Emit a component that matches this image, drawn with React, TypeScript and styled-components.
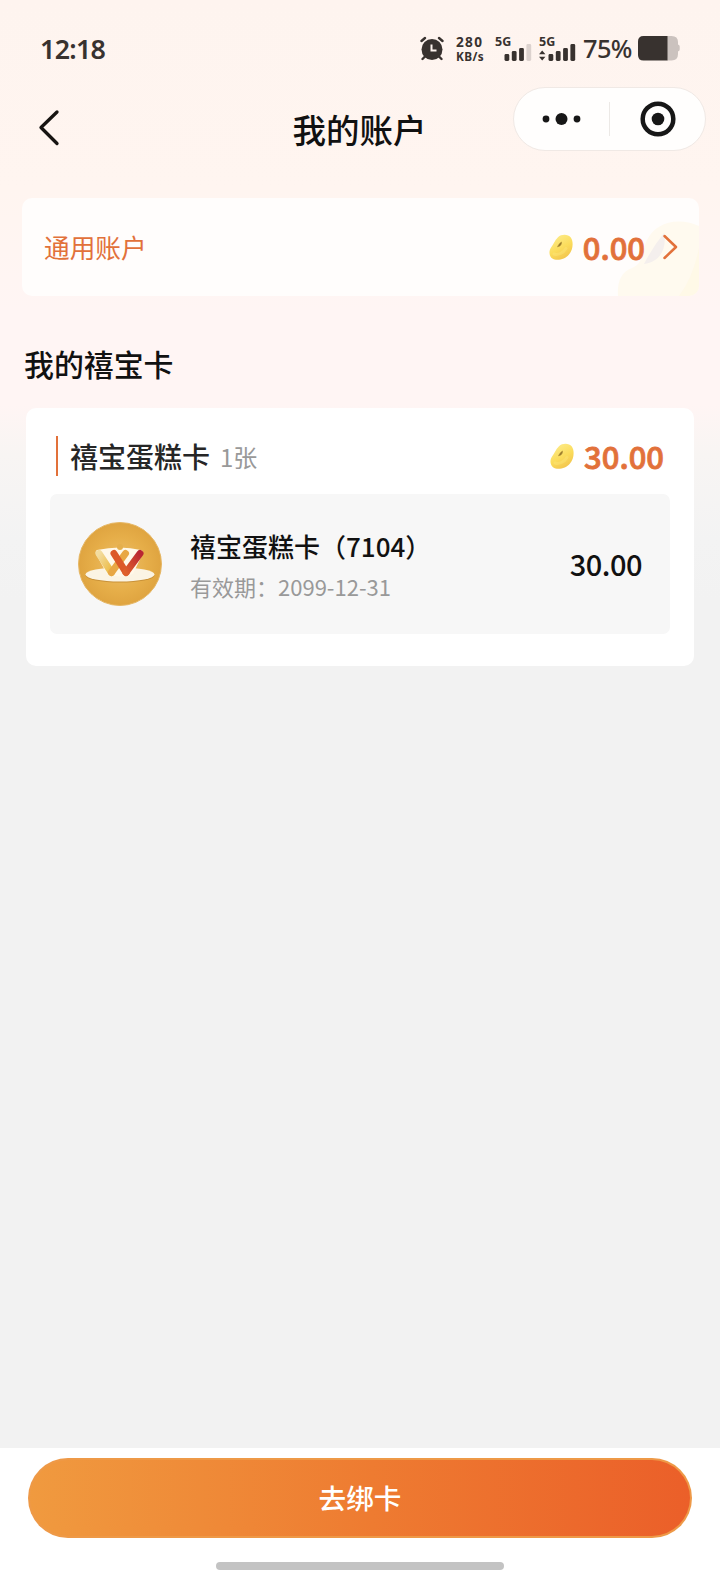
import React from "react";
import styled, { createGlobalStyle } from "styled-components";

const ORANGE = "#e2713a";

const GlobalStyle = createGlobalStyle`
  * { box-sizing: border-box; }
  body {
    margin: 0;
    background: #f2f2f2;
    font-family: "Noto Sans CJK SC", "Noto Sans", sans-serif;
    color: #111;
  }
`;

const Page = styled.div`
  display: flex;
  flex-direction: column;
  width: 720px;
  height: 1584px;
  background: linear-gradient(
    180deg,
    #fef4ef 0,
    #fff5f0 190px,
    #fff5f4 310px,
    #fff5f4 405px,
    #f8f5f3 455px,
    #f3f3f3 540px,
    #f2f2f2 600px
  );
`;

const StatusBar = styled.header`
  display: flex;
  justify-content: space-between;
  align-items: flex-start;
  height: 80px;
  padding: 36px 40px 0 40px;
  color: #38322f;
  font-family: "Noto Sans", sans-serif;
`;

const Clock = styled.time`
  font-size: 26.8px;
  font-weight: 600;
  line-height: 25px;
  letter-spacing: -0.7px;
`;

const StatusIcons = styled.div`
  display: flex;
  align-items: flex-start;
  height: 26px;
`;

const Speed = styled.div`
  display: flex;
  flex-direction: column;
  width: 28px;
  margin-left: 11px;
  font-weight: 700;
  white-space: nowrap;
`;

const SpeedValue = styled.span`
  font-size: 13.6px;
  line-height: 12px;
  letter-spacing: 1.3px;
`;

const SpeedUnit = styled.span`
  margin-top: 1px;
  font-size: 11.8px;
  line-height: 14px;
  letter-spacing: 0.4px;
`;

const Signal = styled.div<{ $width: number; $gap: number }>`
  display: flex;
  flex-direction: column;
  width: ${(p) => p.$width}px;
  margin-left: ${(p) => p.$gap}px;
  svg { margin-top: -4px; }
`;

const SignalLabel = styled.span`
  font-size: 12.5px;
  font-weight: 700;
  line-height: 12px;
`;

const Percent = styled.span`
  width: 49px;
  margin: 0 6px 0 7px;
  font-size: 25.4px;
  font-weight: 500;
  line-height: 24px;
  letter-spacing: -0.6px;
`;

const NavBar = styled.nav`
  display: grid;
  grid-template-columns: 207px 306px 193px;
  height: 118px;
  align-items: start;
`;

const BackButton = styled.button`
  width: 30px;
  height: 40px;
  margin: 27px 0 0 34px;
  padding: 0;
  border: 0;
  background: none;
`;

const NavTitle = styled.h1`
  margin: 27px 1px 0 0;
  font-size: 33.5px;
  font-weight: 500;
  line-height: 44px;
  text-align: center;
`;

const Capsule = styled.div`
  display: grid;
  grid-template-columns: 95px 1px 1fr;
  align-items: center;
  justify-items: center;
  height: 64px;
  margin-top: 7px;
  border: 1px solid #f0e9e5;
  border-radius: 32px;
  background: #fffefd;
`;

const CapsuleLine = styled.i`
  width: 1px;
  height: 34px;
  background: #ece9e6;
`;

const GeneralCard = styled.section`
  position: relative;
  display: flex;
  align-items: center;
  justify-content: space-between;
  height: 98px;
  margin: 0 21px 0 22px;
  padding: 0 21px 0 22px;
  border-radius: 10px;
  overflow: hidden;
  background: #fffdfc;
`;

const Watermark = styled.svg`
  position: absolute;
  right: 0;
  bottom: 0;
`;

const GeneralLabel = styled.span`
  font-size: 25.7px;
  line-height: 36px;
  color: ${ORANGE};
`;

const Amount = styled.div`
  position: relative;
  display: flex;
  align-items: center;
`;

const AmountValue = styled.strong`
  margin: 0 0 0 10px;
  font-size: 31px;
  font-weight: 500;
  line-height: 40px;
  color: ${ORANGE};
  -webkit-text-stroke: 0.8px ${ORANGE};
`;

const ArrowIcon = styled.svg`
  margin: 0 0 0 17px;
`;

const SectionTitle = styled.h2`
  margin: 45px 0 23px 24px;
  font-size: 29.9px;
  font-weight: 500;
  line-height: 44px;
`;

const CardGroup = styled.section`
  height: 258px;
  margin: 0 26px;
  padding: 28px 24px 0 24px;
  border-radius: 10px;
  background: #fff;
`;

const GroupHeader = styled.div`
  display: flex;
  align-items: center;
  height: 40px;
  margin: 0 6px 18px;
`;

const Accent = styled.i`
  width: 2px;
  height: 40px;
  background: ${ORANGE};
`;

const GroupName = styled.h3`
  margin: 0 0 0 12px;
  font-size: 28px;
  font-weight: 500;
  line-height: 40px;
  color: #262626;
`;

const GroupCount = styled.span`
  flex: 1;
  margin: 2px 0 0 10px;
  font-size: 24px;
  line-height: 40px;
  color: #999;
`;

const CardItem = styled.div`
  display: flex;
  align-items: center;
  height: 140px;
  padding: 0 28px;
  border-radius: 7px;
  background: #f7f7f7;
`;

const CardInfo = styled.div`
  flex: 1;
  margin: 3px 0 0 28px;
`;

const CardName = styled.div`
  font-size: 26px;
  font-weight: 500;
  line-height: 40px;
`;

const CardExpiry = styled.div`
  font-size: 22px;
  line-height: 40px;
  color: #999;
`;

const CardBalance = styled.span`
  margin-top: -2px;
  font-size: 29px;
  font-weight: 500;
  line-height: 40px;
  letter-spacing: -0.5px;
`;

const Footer = styled.footer`
  display: flex;
  flex-direction: column;
  align-items: center;
  height: 136px;
  margin-top: auto;
  padding-top: 10px;
  background: #fff;
`;

const BindButton = styled.button`
  width: 664px;
  height: 80px;
  padding: 0 0 1px;
  border: 2px solid transparent;
  border-radius: 40px;
  background:
    linear-gradient(90deg, #f09a3f, #ee7b31 52%, #eb5f29) padding-box,
    linear-gradient(#ee9947, #ee9947) border-box;
  font: 500 27.6px/75px "Noto Sans CJK SC", sans-serif;
  color: #fff;
`;

const HomeIndicator = styled.i`
  width: 288px;
  height: 8px;
  margin-top: 24px;
  border-radius: 4px;
  background: #c3c3c3;
`;

function AlarmIcon() {
  return (
    <svg width="25" height="25" viewBox="0 0 25 25" fill="none" stroke="#38322f" strokeLinecap="round">
      <circle cx="12" cy="13.500" r="10.500" fill="#38322f" stroke="none" />
      <path d="M1.500 5 5 2M22.500 5 19 2M5 20.500 2.500 23M19 20.500l2.500 2.500" strokeWidth="2.400" />
      <path d="M11.500 8.500v6h5" stroke="#fef4ef" strokeWidth="2" strokeLinecap="butt" />
    </svg>
  );
}

const BAR_HEIGHTS = [7, 10, 13, 17];

function Bars({ faded = 0, arrows = false }: { faded?: number; arrows?: boolean }) {
  return (
    <svg width="37" height="17" viewBox="0 0 37 17" fill="#38322f">
      {arrows && <path d="M0 7.300 3.200 3.500 6.400 7.300zM0 9.700h6.400L3.200 13.500z" transform="translate(0 3)" />}
      {BAR_HEIGHTS.map((h, i) => (
        <rect
          key={h}
          x={9.5 + i * 7.3}
          y={17 - h}
          width="4.8"
          height={h}
          rx="1.400"
          fill={i >= 4 - faded ? "#dcd2ce" : undefined}
        />
      ))}
    </svg>
  );
}

function BatteryIcon() {
  return (
    <svg width="42" height="25" viewBox="0 0 42 25">
      <path d="M29 0h4.500Q40 0 40 6v2.500q1.700.5 1.700 2v3q0 1.500-1.700 2V18q0 6.500-6.500 6.500H29z" fill="#cbc2be" />
      <path d="M29.500 0v24.500H5.500Q0 24.500 0 19V5.500Q0 0 5.500 0z" fill="#38322f" />
    </svg>
  );
}

function Bean() {
  return (
    <svg width="24" height="27" viewBox="0 0 24 27">
      <defs>
        <linearGradient id="bean" x1="0.200" y1="0" x2="0.700" y2="1">
          <stop offset="0" stopColor="#fdec8c" />
          <stop offset="0.550" stopColor="#fbdc5b" />
          <stop offset="1" stopColor="#f1c24c" />
        </linearGradient>
      </defs>
      <path
        d="M9 3.200C12.500 0 19 0 21.800 3.500 24.800 8 24 15.500 20 20.500 16 25.500 7.500 27.500 3 24.300 -.5 21.500 0 16 2.200 13.200 4.500 10.500 5.500 6.500 9 3.200z"
        fill="url(#bean)"
      />
      <path d="M5 20c4 1.500 9.500-1 12-5.500" fill="none" stroke="#fff08c" strokeWidth="3" strokeLinecap="round" opacity="0.300" />
      <path d="M12.500 8c.3 2.500-1.300 4.300-4 4.800 1-1.800 2-3.600 4-4.800z" fill="#8f7127" stroke="#b5953c" strokeWidth="0.700" />
    </svg>
  );
}

function CardLogo() {
  return (
    <svg width="84" height="84" viewBox="0 0 84 84" fill="none" strokeLinecap="round">
      <defs>
        <radialGradient id="gold">
          <stop offset="0" stopColor="#edc06b" />
          <stop offset="0.650" stopColor="#e6ae49" />
          <stop offset="1" stopColor="#dfa440" />
        </radialGradient>
        <linearGradient id="yellow" x1="0" y1="0" x2="1" y2="1">
          <stop offset="0" stopColor="#f3dda0" />
          <stop offset="1" stopColor="#ebb83d" />
        </linearGradient>
        <linearGradient id="red" x1="0" y1="1" x2="1" y2="0">
          <stop offset="0" stopColor="#df602b" />
          <stop offset="1" stopColor="#b92632" />
        </linearGradient>
      </defs>
      <circle cx="42" cy="42" r="41.500" fill="url(#gold)" stroke="#e6b765" />
      <ellipse cx="42" cy="53.600" rx="34.500" ry="7" fill="#c99137" />
      <ellipse cx="42" cy="52.500" rx="34.500" ry="7" fill="#fbf4e4" />
      <path d="M19 28Q42 23 63 28Q66 29 64 33L55 52q-12 5-26 0L18 32Q17 29 19 28z" fill="#fff8e9" />
      <circle cx="42" cy="25" r="3" fill="#e5af4c" />
      <path d="M21 31.500 33.500 50.500" stroke="url(#yellow)" strokeWidth="7" />
      <path d="M33.500 50.500 47.500 31.500" stroke="#e8a744" strokeWidth="7" />
      <path d="M36 31.500 48 50.500" stroke="#dc5928" strokeWidth="7" />
      <path d="M48 50.500 62 31.500" stroke="url(#red)" strokeWidth="7" />
    </svg>
  );
}

export default function App() {
  return (
    <Page>
      <GlobalStyle />
      <StatusBar>
        <Clock>12:18</Clock>
        <StatusIcons>
          <AlarmIcon />
          <Speed>
            <SpeedValue>280</SpeedValue>
            <SpeedUnit>KB/s</SpeedUnit>
          </Speed>
          <Signal $width={37} $gap={11}>
            <SignalLabel>5G</SignalLabel>
            <Bars faded={1} />
          </Signal>
          <Signal $width={37} $gap={7}>
            <SignalLabel>5G</SignalLabel>
            <Bars arrows />
          </Signal>
          <Percent>75%</Percent>
          <BatteryIcon />
        </StatusIcons>
      </StatusBar>

      <NavBar>
        <BackButton aria-label="返回">
          <svg width="30" height="40" viewBox="0 0 30 40" fill="none" stroke="#171412" strokeWidth="3.300" strokeLinecap="round" strokeLinejoin="round">
            <path d="M23 5 7 20.500 23 36.500" />
          </svg>
        </BackButton>
        <NavTitle>我的账户</NavTitle>
        <Capsule>
          <svg width="40" height="14" viewBox="0 0 40 14" fill="#171717">
            <circle cx="4" cy="7" r="3.400" />
            <circle cx="19.500" cy="7" r="6" />
            <circle cx="35" cy="7" r="3.400" />
          </svg>
          <CapsuleLine />
          <svg width="36" height="36" viewBox="0 0 36 36">
            <circle cx="18" cy="18" r="15.300" fill="none" stroke="#171717" strokeWidth="4.500" />
            <circle cx="18" cy="18" r="6.300" fill="#171717" />
          </svg>
        </Capsule>
      </NavBar>

      <GeneralCard>
        <Watermark width="82" height="76" viewBox="0 0 82 76">
          <path d="M30 20C38 3 60-4 82 6V76H1C0 62 4 52 15 48 27 43 25 31 30 20z" fill="#fffaef" />
          <path d="M82 28V76H62Q76 58 82 28z" fill="#fff7df" opacity="0.500" />
          <path d="M47 13c3 14-3 29-20 31Q35 28 47 13z" fill="#f4efed" />
        </Watermark>
        <GeneralLabel>通用账户</GeneralLabel>
        <Amount>
          <Bean />
          <AmountValue>0.00</AmountValue>
          <ArrowIcon width="16" height="26" viewBox="0 0 16 26" fill="none" stroke={ORANGE} strokeWidth="2.500" strokeLinecap="round" strokeLinejoin="round">
            <path d="M2.500 2 14 13 2.500 24" />
          </ArrowIcon>
        </Amount>
      </GeneralCard>

      <SectionTitle>我的禧宝卡</SectionTitle>

      <CardGroup>
        <GroupHeader>
          <Accent />
          <GroupName>禧宝蛋糕卡</GroupName>
          <GroupCount>1张</GroupCount>
          <Amount>
            <Bean />
            <AmountValue>30.00</AmountValue>
          </Amount>
        </GroupHeader>
        <CardItem>
          <CardLogo />
          <CardInfo>
            <CardName>禧宝蛋糕卡（7104）</CardName>
            <CardExpiry>有效期：2099-12-31</CardExpiry>
          </CardInfo>
          <CardBalance>30.00</CardBalance>
        </CardItem>
      </CardGroup>

      <Footer>
        <BindButton>去绑卡</BindButton>
        <HomeIndicator />
      </Footer>
    </Page>
  );
}
